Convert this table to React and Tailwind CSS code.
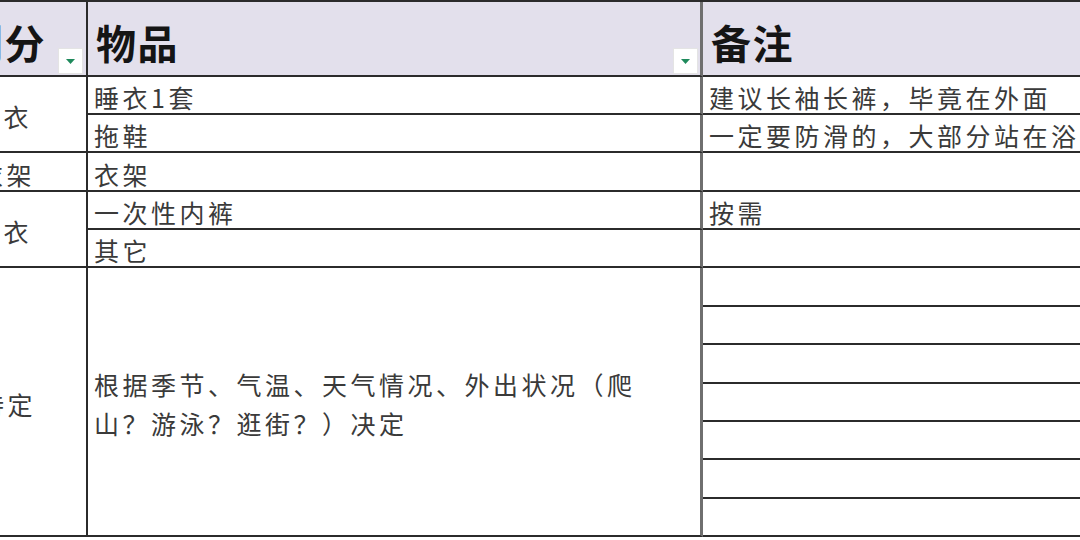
import React from "react";

const font = "font-['Noto_Sans_CJK_SC','Noto_Sans',sans-serif] text-[25px] tracking-[3.5px] text-[#3a3a3a]";
const body = `${font} leading-none`;
const head = "font-['Noto_Sans_CJK_SC','Noto_Sans',sans-serif] text-[40px] font-bold tracking-[1.5px] text-[#151515] leading-none";

const FilterButton = () => (
  <div className="w-[25px] h-[26px] bg-white border border-[#e4e4e4] flex items-center justify-center">
    <svg width="9" height="5" viewBox="0 0 9 5">
      <path d="M0 0 L9 0 L4.5 5 Z" fill="#1f8a5c" />
    </svg>
  </div>
);

const line = "border-b-2 border-[#2b2b2b]";
const c1 = `col-start-1 border-r-2 border-[#2b2b2b] ${line} overflow-hidden flex items-center`;
const c2 = `col-start-2 border-r-[3px] border-r-[#6f6f6f] ${line} overflow-hidden flex items-center pl-[6px] pt-[5px]`;
const c3 = `col-start-3 ${line} overflow-hidden flex items-center pl-[6px] pt-[5px]`;

const notes = ["建议长袖长裤，毕竟在外面", "一定要防滑的，大部分站在浴室", "", "按需", "", "", "", "", "", "", "", ""];

const App = () => {
  return (
    <div className="w-[1080px] h-[540px] bg-white overflow-hidden">
      <div className="grid grid-cols-[88px_615px_1fr] grid-rows-[75px_38px_38px_39px_38px_38px_39px_38px_39px_38px_38px_39px_38px] border-t-2 border-[#2b2b2b]">
        {/* header */}
        <div className={`col-start-1 row-start-1 bg-[#e3e0ec] border-r-2 border-[#2b2b2b] ${line} overflow-hidden flex items-end justify-between pb-[1px] pr-[3px]`}>
          <span className={`${head} ml-[-37px] mb-[12px] whitespace-nowrap`}>划分</span>
          <FilterButton />
        </div>
        <div className={`col-start-2 row-start-1 bg-[#e3e0ec] border-r-[3px] border-r-[#6f6f6f] ${line} flex items-end justify-between pb-[1px] pl-[8px] pr-[2px]`}>
          <span className={`${head} mb-[12px]`}>物品</span>
          <FilterButton />
        </div>
        <div className={`col-start-3 row-start-1 bg-[#e3e0ec] ${line} flex items-end pl-[8px]`}>
          <span className={`${head} mb-[13px]`}>备注</span>
        </div>

        {/* column 1 */}
        <div className={`${c1} row-start-2 row-span-2`}>
          <span className={`${body} ml-[-25px] whitespace-nowrap pt-[5px]`}>睡衣</span>
        </div>
        <div className={`${c1} row-start-4`}>
          <span className={`${body} ml-[-22px] whitespace-nowrap pt-[5px]`}>衣架</span>
        </div>
        <div className={`${c1} row-start-5 row-span-2`}>
          <span className={`${body} ml-[-25px] whitespace-nowrap pt-[5px]`}>内衣</span>
        </div>
        <div className={`${c1} row-start-7 row-span-7`}>
          <span className={`${body} ml-[-21px] whitespace-nowrap pt-[5px]`}>待定</span>
        </div>

        {/* column 2 */}
        <div className={`${c2} row-start-2`}><span className={body}>睡衣1套</span></div>
        <div className={`${c2} row-start-3`}><span className={body}>拖鞋</span></div>
        <div className={`${c2} row-start-4`}><span className={body}>衣架</span></div>
        <div className={`${c2} row-start-5`}><span className={body}>一次性内裤</span></div>
        <div className={`${c2} row-start-6`}><span className={body}>其它</span></div>
        <div className={`${c2} row-start-7 row-span-7`}>
          <p className={`${font} leading-[39px]`}>
            根据季节、气温、天气情况、外出状况（爬
            <br />
            山？游泳？逛街？）决定
          </p>
        </div>

        {/* column 3 */}
        {notes.map((n, i) => (
          <div key={i} className={c3} style={{ gridRowStart: i + 2 }}>
            <span className={`${body} whitespace-nowrap`}>{n}</span>
          </div>
        ))}
      </div>
    </div>
  );
};

export default App;
